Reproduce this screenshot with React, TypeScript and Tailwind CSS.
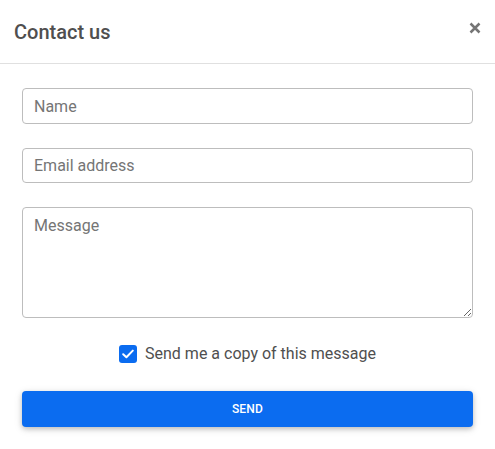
import React from "react";

export default function App() {
  return (
    <div className="w-[495px] h-[449px] bg-white text-[#4f4f4f]" style={{ fontFamily: "Roboto, 'Liberation Sans', sans-serif" }}>
      <div className="h-[64px] border-b border-[#e0e0e0] flex items-center justify-between pl-[14px] pr-[14px]">
        <h5 className="text-[20px] font-medium leading-[24px] text-[#4f4f4f]">Contact us</h5>
        <svg width="12" height="12" viewBox="0 0 12 12" className="-mt-[8px] mr-[0px]">
          <path d="M1.5 1.5 L10.5 10.5 M10.5 1.5 L1.5 10.5" stroke="#757575" strokeWidth="2.5" strokeLinecap="butt" />
        </svg>
      </div>
      <div className="px-[22px] pt-[24px] flex flex-col">
        <input
          placeholder="Name"
          className="h-[36px] w-full rounded-[4px] border border-[#bdbdbd] px-[11px] text-[16px] placeholder:text-[#757575] outline-none"
        />
        <input
          placeholder="Email address"
          className="mt-[24px] h-[35px] w-full rounded-[4px] border border-[#bdbdbd] px-[11px] text-[16px] placeholder:text-[#757575] outline-none"
        />
        <textarea
          placeholder="Message"
          className="mt-[24px] h-[111px] w-full rounded-[4px] border border-[#bdbdbd] px-[11px] pt-[6px] text-[16px] leading-[24px] placeholder:text-[#757575] outline-none block"
        />
        <label className="mt-[26px] flex items-center justify-center gap-[8px] h-[20px]">
          <span className="w-[18px] h-[18px] rounded-[3px] bg-[#0b6cf0] flex items-center justify-center">
            <svg width="12" height="10" viewBox="0 0 12 10">
              <path d="M1.2 5.2 L4.4 8.2 L10.8 1.6" fill="none" stroke="white" strokeWidth="2" strokeLinecap="round" strokeLinejoin="round" />
            </svg>
          </span>
          <span className="text-[16px] text-[#4f4f4f]">Send me a copy of this message</span>
        </label>
        <button className="mt-[27px] h-[36px] w-full rounded-[4px] bg-[#0b6cf0] text-white text-[12px] font-medium uppercase tracking-[0.2px] shadow-[0_2px_5px_0_rgba(0,0,0,0.2),0_2px_10px_0_rgba(0,0,0,0.1)]">
          Send
        </button>
      </div>
    </div>
  );
}
